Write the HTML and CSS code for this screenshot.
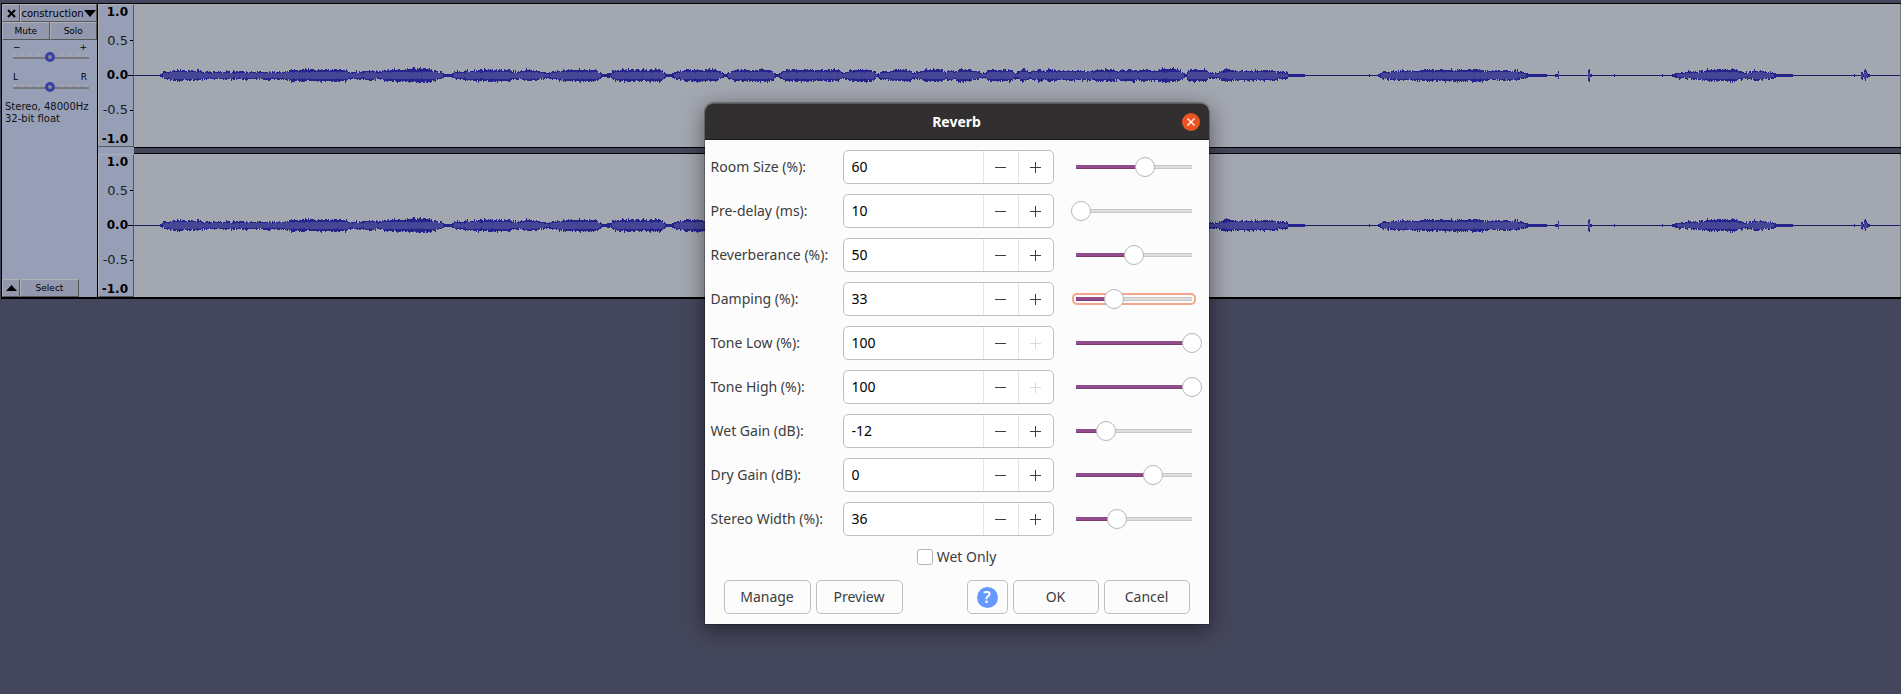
FILE: index.html
```
<!DOCTYPE html>
<html lang="en">
<head>
<meta charset="utf-8">
<title>Reverb</title>
<link rel="stylesheet" href="styles.css">
</head>
<body>
<main class="track">
  <section class="panel">
    <div class="panel-row">
      <button class="cell close" aria-label="Close track"><svg width="9" height="9" viewBox="0 0 9 9"><path d="M1 1l7 7M8 1L1 8" stroke="#000" stroke-width="2"/></svg></button>
      <button class="cell name">construction<svg width="12" height="7" viewBox="0 0 12 7"><path d="M0 0h12L6 7z"/></svg></button>
    </div>
    <div class="panel-row">
      <button class="cell half">Mute</button>
      <button class="cell half">Solo</button>
    </div>
    <div class="knob">
      <div class="ends"><span>−</span><span>+</span></div>
      <input type="range" aria-label="Gain" min="0" max="100" value="49">
    </div>
    <div class="knob">
      <div class="ends"><span>L</span><span>R</span></div>
      <input type="range" aria-label="Pan" min="0" max="100" value="49">
    </div>
    <p class="info">Stereo, 48000Hz<br>32-bit float</p>
    <div class="panel-foot">
      <button class="cell fold" aria-label="Collapse"><svg width="11" height="6" viewBox="0 0 11 6"><path d="M0 6h11L5.500 0z"/></svg></button>
      <button class="cell select">Select</button>
    </div>
  </section>
  <div class="channels">
    <div class="channel">
      <div class="ruler"><b>1.0</b><span class="tick">0.5</span><b class="tick zero">0.0</b><span class="tick">-0.5</span><b>-1.0</b></div>
      <svg class="wave" viewBox="0 0 1767 143" preserveAspectRatio="none" shape-rendering="crispEdges"></svg>
    </div>
    <div class="channel">
      <div class="ruler"><b>1.0</b><span class="tick">0.5</span><b class="tick zero">0.0</b><span class="tick">-0.5</span><b>-1.0</b></div>
      <svg class="wave" viewBox="0 0 1767 143" preserveAspectRatio="none" shape-rendering="crispEdges"></svg>
    </div>
  </div>
</main>

<form class="dialog" role="dialog" aria-labelledby="title">
  <header class="titlebar">
    <h1 id="title">Reverb</h1>
    <button type="button" class="x" aria-label="Close"><svg width="8" height="8" viewBox="0 0 8 8"><path d="M.5 .5l7 7M7.500 .5l-7 7" stroke="#fff" stroke-width="1.300"/></svg></button>
  </header>
  <div class="body">
    <div class="params"></div>
    <label class="check"><input type="checkbox">Wet Only</label>
    <div class="actions">
      <button type="button" class="btn wide">Manage</button>
      <button type="button" class="btn wide">Preview</button>
      <button type="button" class="btn help" aria-label="Help"><span>?</span></button>
      <button type="button" class="btn ok">OK</button>
      <button type="button" class="btn cancel">Cancel</button>
    </div>
  </div>
</form>
<script src="app.js"></script>
</body>
</html>
```
FILE: styles.css
```
* { box-sizing: border-box; }
body {
  margin: 0;
  min-height: 100vh;
  padding-top: 3px;
  background: #44465b;
  color: #000;
  font-family: "DejaVu Sans", sans-serif;
}
button { font: inherit; color: inherit; padding: 0; margin: 0; }
svg { display: block; }

.track {
  display: flex;
  margin-left: 1px;
  border-top: 1px solid #000;
  border-left: 1px solid #000;
  border-bottom: 2px solid #000;
}
.panel {
  display: flex;
  flex-direction: column;
  flex: none;
  width: 96px;
  background: #969fb6;
  border-right: 1px solid #000;
  font-size: 9px;
}
.panel-row, .panel-foot { display: flex; }
.cell {
  display: flex;
  align-items: center;
  justify-content: center;
  height: 18px;
  background: #9398ae;
  border: 1px solid;
  border-color: #b1b1b4 #55575a #55575a #b1b1b4;
}
.close, .fold { width: 18px; flex: none; }
.name { flex: 1; font-size: 10px; }
.half { flex: 1; }
.select { width: 59px; }
.panel-foot { margin-top: auto; }
.knob { padding: 2px 8px 0 11px; height: 30px; }
.ends {
  display: flex;
  justify-content: space-between;
  padding: 0 2px 0 0;
  font-size: 9px;
  line-height: 10px;
}
.knob input {
  appearance: none;
  display: block;
  width: 100%;
  height: 10px;
  margin: 0;
  background:
    linear-gradient(#77777c, #77777c) 50% 5px / 100% 2px no-repeat,
    repeating-linear-gradient(90deg, #b4b4b4 0 1px, transparent 1px 8px) 1px 2px / 100% 3px no-repeat;
}
.knob input::-webkit-slider-thumb {
  appearance: none;
  width: 10px;
  height: 10px;
  border: 3px solid #3840a6;
  border-radius: 50%;
  background: #8a8a92;
}
.info { margin: 1px 3px 0; font-size: 10px; line-height: 12px; white-space: nowrap; color: #111; }

.channels { flex: 1; min-width: 0; background: #969fb6; }
.channel { display: flex; height: 143px; }
.channel + .channel { margin-top: 7px; }
.ruler {
  position: relative;
  display: grid;
  grid-template-rows: 14fr 44fr 27fr 44fr 14fr;
  flex: none;
  width: 36px;
  padding-right: 5px;
  border: 1px solid #b1b1b4;
  border-right-color: #55575a;
  border-bottom-color: #55575a;
  font-size: 12px;
  line-height: 14px;
  text-align: right;
}
.ruler > * { display: flex; align-items: center; justify-content: flex-end; position: relative; }
.ruler span { color: #1a1c24; font-size: 13px; }
.tick::after {
  content: "";
  position: absolute;
  right: -5px;
  width: 3px;
  height: 1px;
  background: #000;
}
.zero::after { width: 5px; }
.wave {
  flex: 1;
  min-width: 0;
  height: 100%;
  background: #a3a7b0;
  border-right: 1px solid #77797e;
}
.channel:first-child .wave { box-shadow: 0 1px #000, 0 6px #44465b, 0 7px #000; }
.peak { fill: #24248c; }
.rms { fill: #464696; }
.axis { fill: #1d1d66; }

.dialog {
  position: absolute;
  top: 103px;
  left: calc(50% - 246px);
  width: 504px;
  border-radius: 8px 8px 0 0;
  background: #fcfcfc;
  box-shadow: 0 0 0 1px rgba(0, 0, 0, .25), 0 5px 22px rgba(0, 0, 0, .5);
  color: #3d3d3d;
  font-family: "Noto Sans", sans-serif;
  font-size: 14px;
  line-height: 20px;
}
.titlebar {
  display: flex;
  align-items: center;
  justify-content: center;
  height: 37px;
  border-radius: 8px 8px 0 0;
  border-top: 1px solid #5c5b5b;
  border-bottom: 1px solid #1c1b1b;
  background: #322f30;
}
.titlebar h1 { margin: 0 0 0 27px; flex: 1; text-align: center; font-size: 14px; color: #fff; }
.x {
  display: grid;
  place-items: center;
  width: 18px;
  height: 18px;
  margin-right: 9px;
  border: 0;
  border-radius: 50%;
  background: #e95420;
}
.body { padding: 10px 6px; }
.params { display: grid; gap: 10px; }
.param { display: grid; grid-template-columns: 132px 211px auto; align-items: center; }
.param label { white-space: nowrap; }
.spin {
  display: flex;
  height: 34px;
  border: 1px solid #c0c0c0;
  border-radius: 5px;
  background: #fff;
  overflow: hidden;
}
.spin input {
  flex: 1;
  min-width: 0;
  padding: 0 8px;
  border: 0;
  background: none;
  color: #000;
  font: inherit;
}
.spin button {
  display: grid;
  place-items: center;
  width: 35px;
  border: 0;
  border-left: 1px solid #e4e4e4;
  background: none;
  color: #3d3d3d;
}
.spin button:disabled { color: #dadada; }
.slide { position: relative; margin-left: 12px; width: 136px; }
.slide input {
  position: relative;
  appearance: none;
  display: block;
  width: 100%;
  height: 20px;
  margin: 0;
  background:
    linear-gradient(#924d8b, #924d8b 75%, #7d3c76 75%) 10px 50% / calc((100% - 20px) * var(--v)) 4px no-repeat,
    linear-gradient(#c6c6c6 25%, #dedede 25%, #dedede 75%, #c6c6c6 75%) 50% 50% / calc(100% - 20px) 4px no-repeat;
}
.slide input::-webkit-slider-thumb {
  appearance: none;
  width: 20px;
  height: 20px;
  border: 1px solid #b6b6b6;
  border-radius: 50%;
  background: #fff;
}
.focused::before {
  content: "";
  position: absolute;
  inset: 4px 6px;
  border: 2px solid #f4a68c;
  border-radius: 5px;
}
.check {
  display: flex;
  align-items: center;
  justify-content: center;
  gap: 4px;
  margin-top: 11px;
}
.check input {
  appearance: none;
  width: 16px;
  height: 16px;
  margin: 0;
  border: 1px solid #b6b6b6;
  border-radius: 3px;
  background: #fff;
}
.actions { display: flex; gap: 5px; margin: 13px 13px 0; }
.btn {
  display: grid;
  place-items: center;
  height: 34px;
  border: 1px solid #c0c0c0;
  border-radius: 5px;
  background: #fcfcfc;
}
.wide { width: 87px; }
.ok, .cancel { width: 86px; }
.help { width: 41px; margin-left: auto; }
.help span {
  width: 21px;
  height: 21px;
  border-radius: 50%;
  background: #6699ff;
  color: #fff;
  font-size: 16px;
  font-weight: 600;
}
```
FILE: app.js
```
const params = [
  ["Room Size (%):", 60, 0, 100],
  ["Pre-delay (ms):", 10, 0, 200],
  ["Reverberance (%):", 50, 0, 100],
  ["Damping (%):", 33, 0, 100],
  ["Tone Low (%):", 100, 0, 100],
  ["Tone High (%):", 100, 0, 100],
  ["Wet Gain (dB):", -12, -20, 10],
  ["Dry Gain (dB):", 0, -20, 10],
  ["Stereo Width (%):", 36, 0, 100]
];
const minus = '<svg width="11" height="11"><path d="M0 5.500h11" stroke="currentColor"/></svg>';
const plus = '<svg width="11" height="11"><path d="M0 5.500h11M5.500 0v11" stroke="currentColor"/></svg>';
document.querySelector(".params").innerHTML = params.map(([name, value, min, max], i) => `
  <div class="param">
    <label for="p${i}">${name}</label>
    <div class="spin">
      <input type="text" id="p${i}" value="${value}">
      <button type="button" aria-label="Decrease">${minus}</button>
      <button type="button" aria-label="Increase"${value === 100 ? " disabled" : ""}>${plus}</button>
    </div>
    <div class="slide${i === 3 ? " focused" : ""}">
      <input type="range" aria-label="${name}" min="${min}" max="${max}" value="${value}" style="--v:${(value - min) / (max - min)}">
    </div>
  </div>`).join("");

// Peak envelope as [position, amplitude] pairs
const env = [0,0,159,0,160,1,165,3,175,4,179,5,182,3.5,200,3.5,240,3,285,3.5,292,5,325,5.5,346,5,348,3,360,3,370,4,380,3,385,5,425,6,434,4,440,3,444,1,450,1,455,3,475,4,480,5,510,5,512,3,518,3,528,5,540,3,548,2,560,4,565,5,595,5,600,2,603,1,610,2,620,5,660,5,666,1,670,1,685,5,715,5,722,2,725,1,735,5,770,5,776,1,778,1,785,5,838,5,842,2,848,3,850,5,870,5,876,2,877,1,880,3,890,3,893,5,910,5,912,2,920,3,926,5,942,5,945,3,950,4,955,3,960,6,975,4,980,2,986,2,988,5,1010,5,1014,2,1020,3,1023,6,1030,3,1041,5,1045,3,1050,5,1060,4,1095,4,1100,5,1115,5,1118,3,1123,5,1135,5,1138,3,1143,5,1155,4,1165,6,1172,6,1180,4,1187,1,1190,5,1207,5,1210,2,1218,2,1225,5,1240,4,1247,4,1273,4,1280,3,1288,2,1289,1,1305,1,1306,0,1369,0,1370,1,1371,0,1378,0,1379,1,1384,3,1401,4,1443,5,1484,4.5,1515,4,1521,3,1526,2,1531,1,1547,1,1548,0,1555,0,1556,1,1558,1,1559,3,1560,0,1588,0,1589,5,1590,6,1591,1,1594,0,1614,0,1615,1,1616,0,1662,0,1663,1,1664,0,1672,0,1673,1,1678,2,1696,3,1712,5,1737,5,1739,3,1748,2,1750,3,1758,4,1769,3,1779,1,1793,1,1794,0,1854,0,1855,1,1856,0,1861,0,1862,3,1864,1,1865,4,1866,5,1867,3,1869,1,1871,0,1901,0];
let seed = 7;
const rand = () => (seed = (seed * 16807) % 2147483647) / 2147483647;
let k = 0, peak = "", rms = "";
for (let x = 134; x < 1900; x++) {
  while (env[k + 2] <= x) k += 2;
  const t = (x - env[k]) / (env[k + 2] - env[k]);
  const a = env[k + 1] + t * (env[k + 3] - env[k + 1]);
  if (a < .5) continue;
  const jitter = () => {
    if (a < 2) return 0;
    const n = rand();
    return n < .04 ? 2 : n < .4 ? 1 : n > .9 ? -1 : 0;
  };
  const up = Math.round(a) + jitter(), down = Math.round(a) + jitter();
  const left = x - 134;
  peak += `M${left} ${71 - up}h1v${up + down + 1}h-1z`;
  if (a >= 2) {
    const r = Math.min(3, Math.round(a) - 1) - (rand() < .1 ? 1 : 0);
    rms += `M${left} ${71 - r}h1v${2 * r + 1}h-1z`;
  }
}
for (const svg of document.querySelectorAll(".wave")) {
  svg.innerHTML = `<rect class="axis" y="71" width="1767" height="1"/><path class="peak" d="${peak}"/><path class="rms" d="${rms}"/>`;
}
```
